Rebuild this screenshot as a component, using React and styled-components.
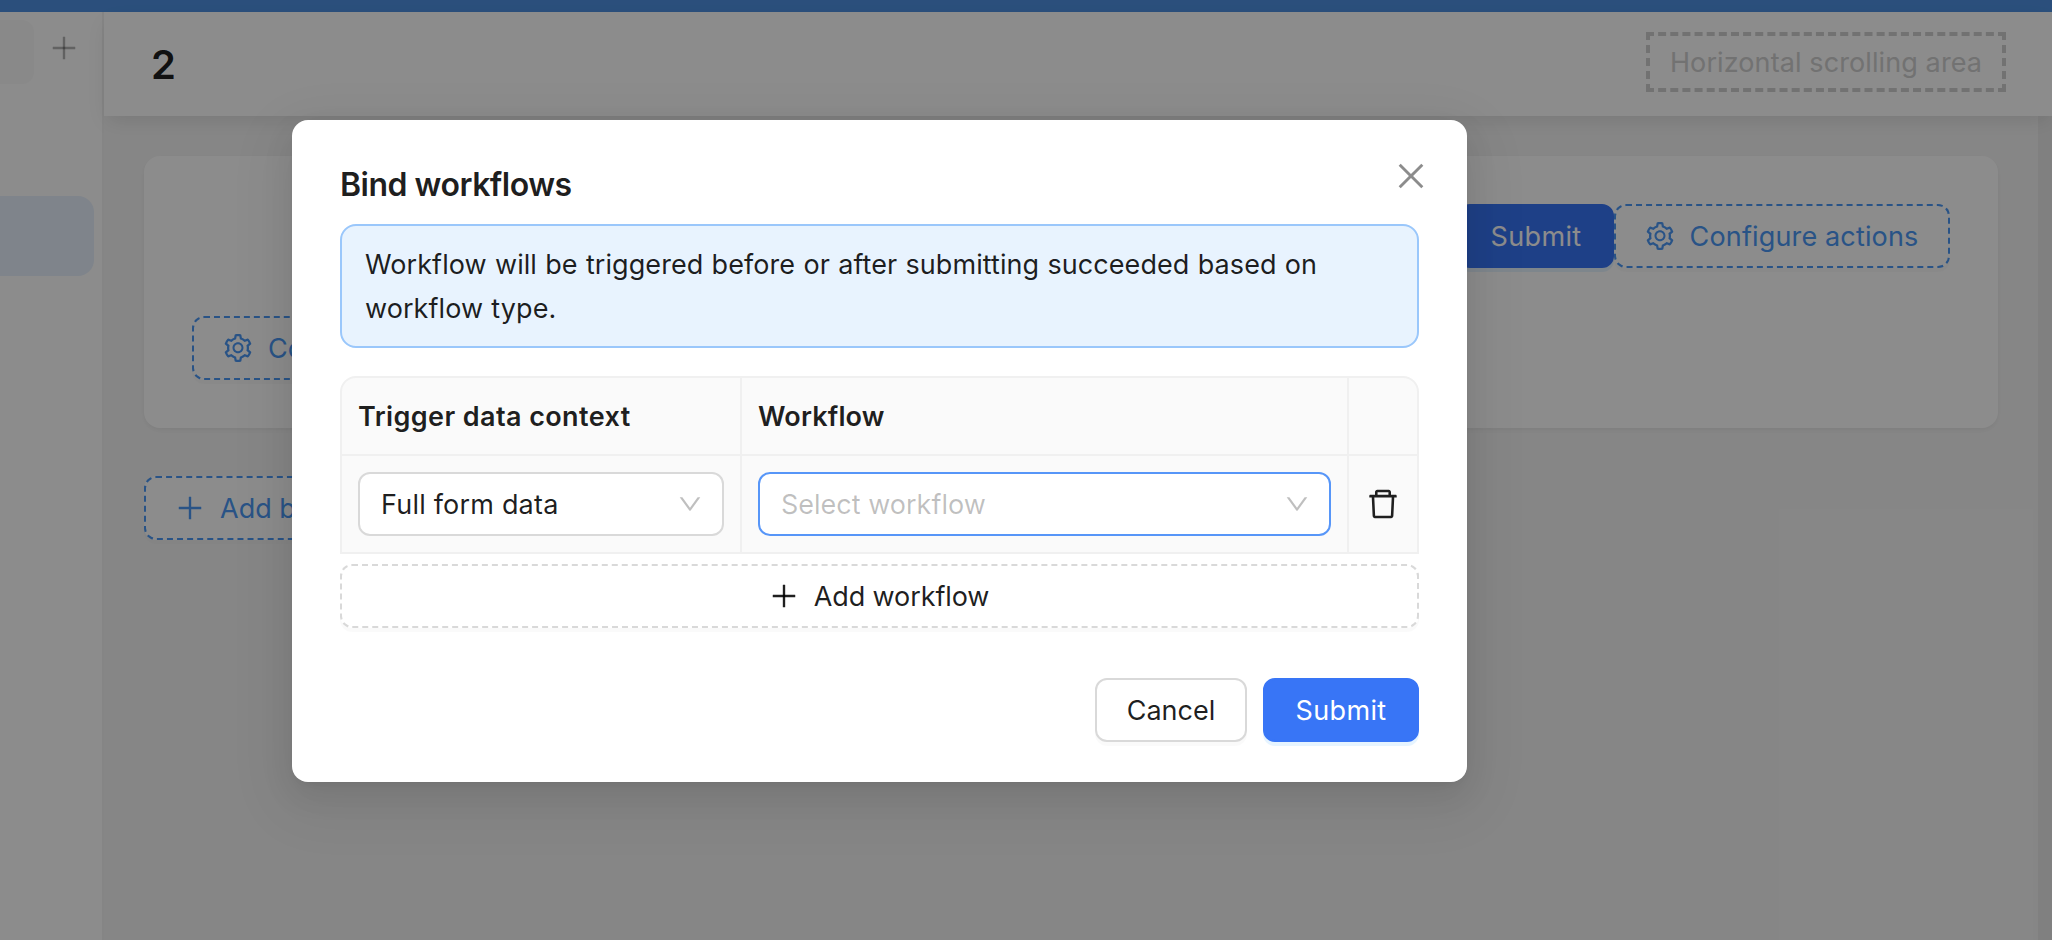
import React from "react";
import styled, { createGlobalStyle, css } from "styled-components";
import {
  AiOutlineClose,
  AiOutlineDelete,
  AiOutlineDown,
  AiOutlinePlus,
  AiOutlineSetting,
} from "react-icons/ai";

const GlobalStyle = createGlobalStyle`
  *, *::before, *::after { box-sizing: border-box; }
  html, body { margin: 0; height: 100%; overflow: hidden; }
  body {
    font-family: Inter, "Liberation Sans", sans-serif;
    font-size: 27px;
    line-height: 44px;
    color: rgba(0, 0, 0, 0.88);
    background: #f5f5f5;
  }
  button { font: inherit; margin: 0; }
  svg { display: block; flex: none; }
`;

/* Ant glyphs are drawn on an 896-unit grid inset by 64. */
const GRID = "64 64 896 896";

const Page = styled.div`
  position: relative;
  display: flex;
  flex-direction: column;
  width: 2052px;
  height: 940px;
  overflow: hidden;
`;

const TopBar = styled.div`
  flex: none;
  height: 12px;
  background: #4f91e2;
`;

const Body = styled.div`
  flex: 1;
  display: flex;
  min-height: 0;
`;

const Sidebar = styled.aside`
  flex: none;
  width: 104px;
  background: #fff;
  border-right: 2px solid #f2f2f2;
`;

const SidebarTop = styled.div`
  display: flex;
  align-items: center;
  height: 80px;
  padding-bottom: 8px;
  margin-bottom: 104px;
  gap: 16px;
  color: rgba(0, 0, 0, 0.3);
`;

const SidebarTab = styled.div`
  width: 34px;
  height: 64px;
  margin-top: 8px;
  border-radius: 0 12px 12px 0;
  background: #fafafa;
`;

const SidebarItem = styled.div`
  width: 94px;
  height: 80px;
  border-radius: 0 16px 16px 0;
  background: #e8f1fe;
`;

const Main = styled.main`
  flex: 1;
  display: flex;
  flex-direction: column;
  min-width: 0;
`;

const Header = styled.header`
  position: relative;
  flex: none;
  display: flex;
  align-items: center;
  justify-content: space-between;
  height: 104px;
  padding: 0 46px 0 47px;
  background: #fff;
  box-shadow: 0 8px 20px -4px rgba(0, 0, 0, 0.11);
`;

const PageTitle = styled.h1`
  margin: 2px 0 0;
  font-size: 40px;
  font-weight: 600;
  line-height: 48px;
`;

const ScrollHint = styled.div`
  display: flex;
  align-items: center;
  justify-content: center;
  width: 360px;
  height: 60px;
  margin-bottom: 4px;
  border: 4px dashed #cfcfcf;
  color: #cfcfcf;
  white-space: nowrap;
`;

const Workspace = styled.div`
  flex: 1;
  display: flex;
`;

const Content = styled.div`
  flex: 1;
  padding: 40px;
`;

const ScrollTrack = styled.div`
  flex: none;
  width: 14px;
  background: #eaeaea;
`;

const Card = styled.section`
  height: 272px;
  margin-bottom: 48px;
  padding: 48px;
  border-radius: 16px;
  background: #fff;
  box-shadow: 0 2px 4px rgba(0, 0, 0, 0.03), 0 2px 12px -2px rgba(0, 0, 0, 0.02),
    0 4px 8px rgba(0, 0, 0, 0.02);
`;

const CardActions = styled.div`
  display: flex;
  justify-content: flex-end;
  margin-bottom: 48px;
`;

/* Text run beside an icon or alone, set slightly low so it centres on x-height. */
const Label = styled.span`
  padding-top: 2px;
  letter-spacing: ${(p) => p.$tracking || 0}px;
`;

const buttonTones = {
  primary: css`
    background: #3875f6;
    border: 2px solid #3875f6;
    color: #fff;
    box-shadow: 0 4px 0 rgba(5, 145, 255, 0.1);
  `,
  plain: css`
    background: #fff;
    border: 2px solid #d9d9d9;
    box-shadow: 0 4px 0 rgba(0, 0, 0, 0.02);
  `,
  dashed: css`
    background: #fff;
    border: 2px dashed #d9d9d9;
    box-shadow: 0 4px 0 rgba(0, 0, 0, 0.02);
  `,
  designer: css`
    background: #fff;
    border: 2px dashed #4b98f5;
    color: #4b98f5;
    box-shadow: 0 4px 0 rgba(0, 0, 0, 0.02);
  `,
};

const Button = styled.button`
  display: inline-flex;
  align-items: center;
  justify-content: center;
  gap: 16px;
  width: ${(p) => (p.$width ? `${p.$width}px` : p.$block ? "100%" : "auto")};
  height: 64px;
  padding: 0 30px;
  border-radius: 12px;
  color: rgba(0, 0, 0, 0.88);
  white-space: nowrap;
  ${(p) => buttonTones[p.$tone]}
`;

const Mask = styled.div`
  position: absolute;
  inset: 0;
  padding: 120px 0 0 292px;
  background: rgba(0, 0, 0, 0.45);
`;

const Dialog = styled.div`
  position: relative;
  width: 1175px;
  height: 662px;
  padding: 41px 48px 40px;
  border-radius: 16px;
  background: #fff;
  box-shadow: 0 12px 32px rgba(0, 0, 0, 0.08), 0 6px 12px -8px rgba(0, 0, 0, 0.12),
    0 18px 56px 16px rgba(0, 0, 0, 0.05);
`;

const DialogTitle = styled.h2`
  margin: 0 0 15px;
  font-size: 32px;
  font-weight: 600;
  line-height: 48px;
  letter-spacing: -0.5px;
`;

const CloseButton = styled.button`
  position: absolute;
  top: 34px;
  right: 34px;
  display: flex;
  align-items: center;
  justify-content: center;
  width: 44px;
  height: 44px;
  padding: 0;
  border: 0;
  background: transparent;
  color: rgba(0, 0, 0, 0.45);
`;

const Notice = styled.div`
  margin-bottom: 28px;
  padding: 17px 23px 15px;
  border: 2px solid #9ac7fb;
  border-radius: 16px;
  background: #e8f3fe;
  letter-spacing: 0.07px;
  word-spacing: 0.6px;
`;

const Table = styled.div`
  display: grid;
  grid-template-columns: 400px 607px 68px;
  grid-template-rows: 78px 96px;
  margin-bottom: 10px;
  border: 2px solid #f0f0f0;
  border-radius: 16px 16px 0 0;
  background: #fafafa;
`;

const Cell = styled.div`
  display: flex;
  align-items: center;
  padding: ${(p) => (p.$last ? 0 : "0 16px")};
  justify-content: ${(p) => (p.$last ? "center" : "flex-start")};
  border-right: ${(p) => (p.$last ? "0" : "2px solid #f0f0f0")};
  border-bottom: ${(p) => (p.$head ? "2px solid #f0f0f0" : "0")};
  font-weight: ${(p) => (p.$head ? 600 : 400)};
`;

const SelectBox = styled.div`
  display: flex;
  align-items: center;
  justify-content: space-between;
  width: 100%;
  height: 64px;
  padding: 0 20px 0 21px;
  border: 2px solid ${(p) => (p.$active ? "#5796f8" : "#d9d9d9")};
  border-radius: 12px;
  background: #fff;
  color: ${(p) => (p.$active ? "rgba(0, 0, 0, 0.25)" : "rgba(0, 0, 0, 0.88)")};

  svg { color: rgba(0, 0, 0, 0.25); }
`;

const Footer = styled.div`
  display: flex;
  justify-content: flex-end;
  gap: 16px;
  margin-top: 50px;
`;

function Select({ text, tracking, active }) {
  return (
    <SelectBox $active={active}>
      <Label $tracking={tracking}>{text}</Label>
      <AiOutlineDown size={24} viewBox={GRID} />
    </SelectBox>
  );
}

export default function App() {
  return (
    <>
      <GlobalStyle />
      <Page>
        <TopBar />
        <Body>
          <Sidebar>
            <SidebarTop>
              <SidebarTab />
              <AiOutlinePlus size={28} viewBox={GRID} />
            </SidebarTop>
            <SidebarItem />
          </Sidebar>
          <Main>
            <Header>
              <PageTitle>2</PageTitle>
              <ScrollHint>
                <Label $tracking={0.1}>Horizontal scrolling area</Label>
              </ScrollHint>
            </Header>
            <Workspace>
              <Content>
                <Card>
                  <CardActions>
                    <Button $tone="primary" $width={156}>
                      <Label $tracking={0.35}>Submit</Label>
                    </Button>
                    <Button $tone="designer" $width={336}>
                      <AiOutlineSetting size={28} viewBox={GRID} />
                      <Label $tracking={0.15}>Configure actions</Label>
                    </Button>
                  </CardActions>
                  <Button $tone="designer">
                    <AiOutlineSetting size={28} viewBox={GRID} />
                    <Label $tracking={0.15}>Configure fields</Label>
                  </Button>
                </Card>
                <Button $tone="designer">
                  <AiOutlinePlus size={28} viewBox={GRID} />
                  <Label>Add block</Label>
                </Button>
              </Content>
              <ScrollTrack />
            </Workspace>
          </Main>
        </Body>
        <Mask>
          <Dialog role="dialog" aria-label="Bind workflows">
            <DialogTitle>Bind workflows</DialogTitle>
            <CloseButton aria-label="Close">
              <AiOutlineClose size={32} viewBox={GRID} />
            </CloseButton>
            <Notice>
              Workflow will be triggered before or after submitting succeeded based on workflow type.
            </Notice>
            <Table>
              <Cell $head>
                <Label $tracking={0.4}>Trigger data context</Label>
              </Cell>
              <Cell $head>
                <Label $tracking={0.15}>Workflow</Label>
              </Cell>
              <Cell $head $last />
              <Cell>
                <Select text="Full form data" tracking={0.2} />
              </Cell>
              <Cell>
                <Select text="Select workflow" active />
              </Cell>
              <Cell $last>
                <AiOutlineDelete size={32} viewBox={GRID} />
              </Cell>
            </Table>
            <Button $tone="dashed" $block>
              <AiOutlinePlus size={28} viewBox={GRID} />
              <Label $tracking={-0.1}>Add workflow</Label>
            </Button>
            <Footer>
              <Button $tone="plain" $width={152}>
                <Label>Cancel</Label>
              </Button>
              <Button $tone="primary" $width={156}>
                <Label $tracking={0.35}>Submit</Label>
              </Button>
            </Footer>
          </Dialog>
        </Mask>
      </Page>
    </>
  );
}
